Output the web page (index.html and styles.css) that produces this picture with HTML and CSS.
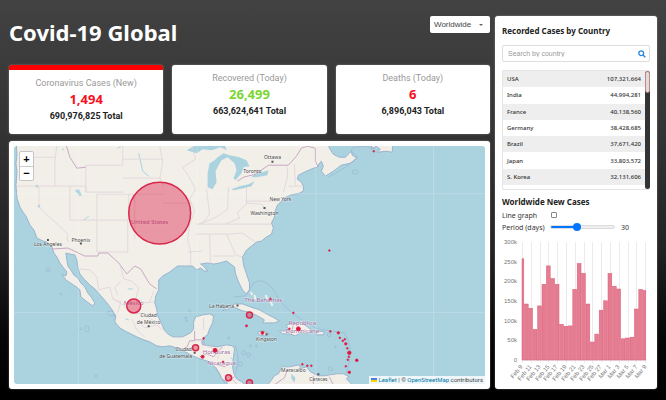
FILE: index.html
```html
<!DOCTYPE html>
<html lang="en">
<head>
<meta charset="utf-8">
<meta name="viewport" content="width=device-width, initial-scale=1">
<title>Covid-19 Global</title>
<link rel="stylesheet" href="styles.css">
</head>
<body>
<main class="app">
  <section class="main">
    <header class="header">
      <h1>Covid-19 Global</h1>
      <div class="picker">
        <select aria-label="Country"><option>Worldwide</option></select>
      </div>
    </header>
    <div class="stats">
      <article class="card stat stat-active">
        <h2>Coronavirus Cases (New)</h2>
        <p class="count red">1,494</p>
        <p class="total">690,976,825 Total</p>
      </article>
      <article class="card stat">
        <h2>Recovered (Today)</h2>
        <p class="count green">26,499</p>
        <p class="total">663,624,641 Total</p>
      </article>
      <article class="card stat">
        <h2>Deaths (Today)</h2>
        <p class="count red">6</p>
        <p class="total">6,896,043 Total</p>
      </article>
    </div>
    <div class="card map-card">
      <div class="map">
        <svg class="map-canvas" viewBox="14 146 472 240" preserveAspectRatio="xMidYMid slice" role="img" aria-label="Map of cases">
          <g class="land">
            <path d="M16 140L17 156L16 164L17 173L16 186L17 199L20 208L23 213L26 217L30 226L34 231L37 239L43 242L47 243L52 248L54 254L57 258L60 264L63 268L67 273L66 277L62 275L66 281L72 285L78 289L80 291L81 298L86 302L90 305L93 307L95 304L92 299L88 294L85 288L81 284L78 279L74 276L71 271L68 267L67 261L66 254L70 255L75 256L77 261L78 268L80 275L84 280L90 286L95 290L102 298L108 305L113 312L116 317L115 323L120 329L125 332L131 335L137 338L144 341L150 343L157 347L163 348L170 347L180 350L193 357L200 360L207 362L212 364L215 368L218 372L220 375L222 380L227 383L230 390H250L242 383L237 380L234 374L233 367L234 358L235 350L233 347L227 346L218 348L210 347L203 346L202 343L205 338L208 336L210 330L213 324L214 317L210 315L203 316L196 318L194 323L194 330L191 334L183 338L173 338L168 335L165 332L162 325L158 317L157 310L155 304L156 297L159 291L159 287L159 281L163 277L170 273L178 267L186 267L193 267L197 271L201 269L205 272L208 272L204 267L201 265L208 264L214 265L220 264L227 262L231 265L235 268L236 275L239 283L243 291L247 295L250 291L250 284L247 275L244 266L243 258L247 251L252 247L257 243L262 242L267 238L272 235L274 229L272 224L275 218L276 211L278 206L285 199L291 196L300 194L304 192L304 187L302 183L298 180L299 176L307 172L314 169L318 168L320 164L322 162L324 167L322 172L326 177L334 172L342 166L351 164L358 159L353 156L352 152L346 158L340 158L334 155L330 149L328 140Z"/>
            <path d="M372 150L377 147L381 150L378 153L387 152L393 153L394 140H374Z"/>
            <path d="M223 312L228 307L236 305L243 305L251 308L260 311L267 315L273 318L280 322L275 324L263 324L265 321L260 318L254 315L249 313L243 312L234 308Z"/>
            <path d="M280 332L289 332L287 326L294 324L302 324L308 328L313 332L309 335L301 334L296 337L290 335L283 335ZM258 333L264 332L270 335L265 337L260 336ZM317 332L325 333L324 336L317 336Z"/>
            <path d="M265 390L270 384L275 377L279 375L283 368L290 368L300 366L301 370L307 368L311 373L319 377L325 377L331 376L338 375L344 375L350 378L347 380L353 386V390Z"/>
            <path d="M251 293l2 3M255 296l1 5M266 296l2 4M271 302l2 5" stroke-width="2" stroke="#f2efe9"/>
          </g>
          <g class="water">
            <path d="M187 151L196 146L205 142H224L227 151L221 148L212 151L203 150L197 154ZM224 154L218 158L215 161L210 164L208 174L208 188L213 190L217 183L216 172L219 166L222 161L228 158L235 164L237 171L234 179L236 181L242 174L244 168L250 167L247 161L240 158L230 156ZM232 190L240 187L249 185L255 182L252 187L244 189L234 191ZM252 178L256 174L263 173L269 171L268 176L257 178Z"/>
            <path d="M75 191L79 190L82 196L80 197Z"/><path d="M337 146l4 6 6 1 6-7z"/><path d="M292 375l4 4-1 5-3-4zM209 277l1 2"/>
            <g class="lakes"><circle cx="22" cy="166" r="1"/><circle cx="37" cy="187" r="1"/><circle cx="39" cy="207" r="1"/><path d="M62 150h2M84 221l5-4M139 154l4 18 6 5M118 149l3-2M128 290h5M126 320l3 1M231 359l3 2"/></g>
          </g>
          <g class="borders">
            <path d="M17 187H86V193H124M39 187V208L68 235M55 187V161L57 146M70 187V221H128M86 166V193M86 166H123V146M123 179H161M97 195V253H128V221M68 235L67 241L70 243M97 195H165M129 221V195M135 195V240M160 146L163 163L160 179L164 187M123 160H163M21 160L36 158L55 158M135 222H161M163 204H192M192 146L196 160L183 168L189 177L196 190L190 200L195 212L190 225L188 241L191 252V266M207 190L210 215L203 225M229 188L228 210L220 216L210 221L199 225M247 188V205L238 213L240 219L226 225L196 225M247 202H279M247 204L262 205L272 217M226 225H272M196 235H229M210 235L211 267M227 235L236 256L243 258M229 235L243 234L256 243M188 253L203 252M213 257H235M288 168V178L284 193M295 165L296 186M289 187H303"/>
            <path class="national" d="M62 140L67 148L70 158L77 169L86 168M52 250L68 249L85 257H98L99 254H108L119 264L127 275L135 267L141 270L150 285L157 290M238 182L244 178L256 175L269 166H289L297 157L302 149L308 147L316 149V162L319 168M186 351L190 342H195V332M195 341H203L206 347M200 358L207 355L214 358L223 348M214 365L226 368M227 383L235 378M294 325L292 335M275 386L285 379L288 371M314 377V386M330 378L334 386"/>
            <path d="M80 270L90 271L97 278L99 291L110 288L113 300L121 303L118 314M120 265L124 280L132 282L139 289L136 300L146 304L155 303M113 300L125 307L131 314L143 315L154 322M140 324L145 329L157 326L163 331M132 320L137 331L145 338M121 282L115 289L118 296M150 303L154 292M204 319V331M205 346L214 350M220 349L218 360"/>
          </g>
          <g class="marine">
            <path d="M234 298L246 297L254 284Q262 278 272 288Q279 302 290 312Q300 320 318 330L345 334Q356 350 347 374M329 178Q351 167 358 157Q348 151 355 148Q369 146 376 149M238 386L229 376M216 368L226 386M236 347Q241 360 236 374M107 313l5-1 3 5-5 0z"/>
            <ellipse cx="356" cy="173" rx="3" ry="2"/><circle cx="48" cy="271" r="2"/><circle cx="61" cy="295" r="1"/><circle cx="81" cy="330" r="1"/><ellipse cx="87" cy="330" rx="2" ry="3"/><circle cx="96" cy="377" r="1"/><circle cx="190" cy="312" r="1"/><circle cx="186" cy="319" r="1"/><circle cx="187" cy="322" r="1"/><circle cx="229" cy="339" r="1"/><circle cx="244" cy="354" r="2"/><circle cx="249" cy="356" r="2"/><circle cx="241" cy="365" r="2"/><circle cx="251" cy="347" r="1"/><circle cx="257" cy="347" r="1"/><circle cx="330" cy="336" r="2"/><circle cx="336" cy="348" r="1"/><circle cx="331" cy="370" r="2"/>
          </g>
          <path class="tiles" d="M78.500 146V386M197.500 146V386M316.500 146V386M434.500 146V386M14 194.500H486M14 313.500H486"/>
          <g class="places">
            <text x="48" y="247">Los Angeles</text><text x="81" y="243">Phoenix</text><text x="273" y="160">Ottawa</text><text x="253" y="174">Toronto</text><text x="281" y="202">New York</text><text x="265" y="216">Washington</text><text x="149" y="318">Ciudad</text><text x="149" y="325">de México</text><text x="222" y="309">La Habana</text><text x="267" y="342">Kingston</text><text x="184" y="352">Ciudad</text><text x="176" y="359">de Guatemala</text><text x="294" y="373">Maracaibo</text><text x="319" y="382">Caracas</text>
            <g class="country"><text x="150" y="225">United States</text><text x="134" y="306">México</text><text x="264" y="303">The Bahamas</text><text x="303" y="326">República</text><text x="303" y="334">Dominicana</text><text x="217" y="355">Honduras</text><text x="222" y="366">Nicaragua</text></g>
            <path class="dots" d="M80 244.500h2M272 162.500h2M264 209h2M148 327.500h2M237 306.500h2M266 335.500h2M194 354h2M318 375.500h2M47 241h2"/>
          </g>
          <g class="cases">
            <circle cx="160" cy="214" r="31"/><circle cx="134" cy="307" r="7"/><circle cx="250" cy="316" r="3"/><circle cx="196" cy="349" r="3"/><circle cx="229" cy="379" r="3"/><circle cx="250" cy="384" r="3"/>
            <g class="small"><circle cx="215.500" cy="351.500" r="2"/><circle cx="299" cy="330" r="2"/><circle cx="203" cy="358" r="1.500"/><circle cx="263" cy="334" r="1.500"/><circle cx="350" cy="354" r="1.700"/><circle cx="357.500" cy="361.500" r="1.300"/><circle cx="350" cy="373.500" r="1.200"/><circle cx="247" cy="327" r="1"/><circle cx="271" cy="300" r=".8"/><circle cx="294" cy="314" r=".8"/><circle cx="290" cy="330" r=".8"/><circle cx="204" cy="339.500" r=".8"/><circle cx="223.500" cy="363" r=".8"/><circle cx="303" cy="365.500" r=".8"/><circle cx="308" cy="367" r=".8"/><circle cx="312" cy="367" r=".8"/><circle cx="331" cy="332.500" r=".8"/><circle cx="339" cy="334" r="1.200"/><circle cx="340.500" cy="339" r=".8"/><circle cx="343.500" cy="342" r=".8"/><circle cx="345.500" cy="340.500" r=".8"/><circle cx="346.500" cy="345" r="1.200"/><circle cx="348" cy="349.500" r=".8"/><circle cx="349.500" cy="358" r=".8"/><circle cx="348.500" cy="361" r=".8"/><circle cx="346.500" cy="367.500" r=".8"/><circle cx="374.500" cy="152" r=".8"/><circle cx="330" cy="251.500" r=".8"/></g>
          </g>
        </svg>
        <div class="zoom">
          <button type="button" aria-label="Zoom in">+</button>
          <button type="button" aria-label="Zoom out">−</button>
        </div>
        <div class="attribution"><svg class="flag" viewBox="0 0 6 4" aria-hidden="true"><path fill="#4c7be1" d="M0 0h6v2H0z"/><path fill="#ffd500" d="M0 2h6v2H0z"/></svg> <a href="#">Leaflet</a> | © <a href="#">OpenStreetMap</a> contributors</div>
      </div>
    </div>
  </section>

  <aside class="card panel">
    <h2>Recorded Cases by Country</h2>
    <div class="search">
      <input type="text" placeholder="Search by country" aria-label="Search by country">
      <svg viewBox="0 0 8 8" aria-hidden="true"><circle cx="3.200" cy="3.200" r="2.400"/><path d="M5 5L7.300 7.300"/></svg>
    </div>
    <div class="countries">
      <table>
        <tbody>
          <tr><td>USA</td><td>107,321,664</td></tr>
          <tr><td>India</td><td>44,994,281</td></tr>
          <tr><td>France</td><td>40,138,560</td></tr>
          <tr><td>Germany</td><td>38,428,685</td></tr>
          <tr><td>Brazil</td><td>37,671,420</td></tr>
          <tr><td>Japan</td><td>33,803,572</td></tr>
          <tr><td>S. Korea</td><td>32,131,606</td></tr>
        </tbody>
      </table>
      <div class="track"><div class="thumb"></div></div>
    </div>
    <h2 class="chart-title">Worldwide New Cases</h2>
    <div class="option">
      <label for="line">Line graph</label>
      <input id="line" type="checkbox">
    </div>
    <div class="option">
      <label for="period">Period (days)</label>
      <input id="period" type="range" min="7" max="65" value="30">
      <output for="period">30</output>
    </div>
    <svg class="chart" viewBox="502 238 148 142" role="img" aria-label="New cases per day">
      <path class="grid" d="M522.500 242V363M531.500 242V363M540.500 242V363M548.500 242V363M557.500 242V363M566.500 242V363M575.500 242V363M584.500 242V363M592.500 242V363M601.500 242V363M610.500 242V363M619.500 242V363M628.500 242V363M636.500 242V363M645.500 242V363M522 360.500H646"/>
      <g class="bars">
        <rect x="522" y="258.800" width="1.800" height="101.200"/><rect x="524.400" y="304" width="3.800" height="56"/><rect x="528.800" y="308.200" width="3.800" height="51.800"/><rect x="533.200" y="329.400" width="3.800" height="30.600"/><rect x="537.600" y="305.900" width="3.800" height="54.100"/><rect x="542" y="284.300" width="3.800" height="75.700"/><rect x="546.400" y="265.900" width="3.800" height="94.100"/><rect x="550.800" y="278.500" width="3.800" height="81.500"/><rect x="555.200" y="284.300" width="3.800" height="75.700"/><rect x="559.600" y="324.300" width="3.800" height="35.700"/><rect x="564" y="326.300" width="3.800" height="33.700"/><rect x="568.400" y="325.900" width="3.800" height="34.100"/><rect x="572.800" y="289.400" width="3.800" height="70.600"/><rect x="577.200" y="263.500" width="3.800" height="96.500"/><rect x="581.600" y="273.400" width="3.800" height="86.600"/><rect x="586" y="304" width="3.800" height="56"/><rect x="590.400" y="342" width="3.800" height="18"/><rect x="594.800" y="334.100" width="3.800" height="25.900"/><rect x="599.200" y="310.200" width="3.800" height="49.800"/><rect x="603.600" y="300.800" width="3.800" height="59.200"/><rect x="608" y="273.400" width="3.800" height="86.600"/><rect x="612.400" y="286.200" width="3.800" height="73.800"/><rect x="616.800" y="289" width="3.800" height="71"/><rect x="621.200" y="338.800" width="3.800" height="21.200"/><rect x="625.600" y="338" width="3.800" height="22"/><rect x="630" y="337.200" width="3.800" height="22.800"/><rect x="634.400" y="309" width="3.800" height="51"/><rect x="638.800" y="289.400" width="3.800" height="70.600"/><rect x="643.200" y="290.600" width="2.600" height="69.400"/>
      </g>
      <g class="y-axis"><text x="517" y="244">300k</text><text x="517" y="264">250k</text><text x="517" y="283">200k</text><text x="517" y="303">150k</text><text x="517" y="323">100k</text><text x="517" y="342">50k</text><text x="517" y="362">0</text></g>
      <g class="x-axis"><text transform="translate(523 367) rotate(-50)">Feb 9</text><text transform="translate(532 367) rotate(-50)">Feb 11</text><text transform="translate(541 367) rotate(-50)">Feb 13</text><text transform="translate(550 367) rotate(-50)">Feb 15</text><text transform="translate(558 367) rotate(-50)">Feb 17</text><text transform="translate(567 367) rotate(-50)">Feb 19</text><text transform="translate(576 367) rotate(-50)">Feb 21</text><text transform="translate(585 367) rotate(-50)">Feb 23</text><text transform="translate(594 367) rotate(-50)">Feb 25</text><text transform="translate(602 367) rotate(-50)">Feb 27</text><text transform="translate(611 367) rotate(-50)">Mar 1</text><text transform="translate(620 367) rotate(-50)">Mar 3</text><text transform="translate(629 367) rotate(-50)">Mar 5</text><text transform="translate(638 367) rotate(-50)">Mar 7</text><text transform="translate(647 367) rotate(-50)">Mar 9</text></g>
    </svg>
  </aside>
</main>
</body>
</html>
```
FILE: styles.css
```css
* { box-sizing: border-box; margin: 0; padding: 0; }

body {
  min-height: 100vh;
  background: linear-gradient(#424242, #333 34%, #222 62%, #060606 84%, #000);
  font-family: "Noto Sans", "Open Sans", sans-serif;
  color: #222;
}

.app {
  display: grid;
  grid-template-columns: minmax(0, 1fr) 162px;
  gap: 5px;
  padding: 16px 9px 9px;
}

.card {
  background: #fff;
  border-radius: 3px;
  box-shadow: 0 0 2px rgba(255, 255, 255, .4);
}

.main { display: flex; flex-direction: column; min-width: 0; }

.header {
  display: flex;
  justify-content: space-between;
  align-items: flex-start;
  height: 49px;
}

h1 { font-size: 22px; line-height: 32px; color: #fff; }

.picker { position: relative; }

.picker select {
  appearance: none;
  display: block;
  width: 60px;
  height: 17px;
  padding: 0 4px;
  border: 0;
  border-radius: 2px;
  background: #fff;
  color: #444;
  font: 8px "Liberation Sans", sans-serif;
}

.picker::after {
  content: "";
  position: absolute;
  right: 7px;
  top: 8px;
  border: 2px solid transparent;
  border-top-color: #666;
}

.stats { display: grid; grid-template-columns: repeat(3, 1fr); gap: 9px; }

.stat { height: 69px; padding-top: 7px; text-align: center; }
.stat-active { border-top: 5px solid #f00; }
.stat h2 { font: 9px/12px Roboto, sans-serif; color: #999; }
.count { font-size: 13px; line-height: 20px; font-weight: 700; }
.red { color: #f8101c; }
.green { color: #7bd62f; }
.total { font: 700 9px/14px Roboto, sans-serif; }

.map-card { display: flex; flex: 1; margin-top: 7px; padding: 5px; }

.map {
  position: relative;
  flex: 1;
  min-width: 0;
  overflow: hidden;
  border-radius: 3px;
  background: #aad3df;
}

.map-canvas { position: absolute; width: 100%; height: 100%; }
.land { fill: #f2efe9; stroke: #9bb5cf; stroke-width: 1; }
.water { fill: #aad3df; }
.lakes { stroke: #aad3df; fill: #aad3df; }
.lakes path { fill: none; }
.borders { fill: none; stroke: #dccfd8; stroke-width: .7; }
.national { stroke: #c9a9c5; stroke-width: 1; }
.marine { fill: none; stroke: #98a9cd; stroke-width: .7; opacity: .7; }
.tiles { stroke: #fff; stroke-width: 1; opacity: .2; }
.places { font-size: 5px; text-anchor: middle; fill: #444; }
.places text { stroke: #fff; stroke-width: 1; stroke-opacity: .5; paint-order: stroke; }
.places .country { font-size: 6px; fill: #a06a9d; }
.dots { stroke: #555; stroke-width: 2; }
.cases { fill: #dc143c; fill-opacity: .4; stroke: #d9284c; stroke-width: 1.500; }
.small { fill-opacity: 1; stroke-width: 1; }

.zoom {
  position: absolute;
  left: 5px;
  top: 5px;
  border: 1px solid #c5c5c5;
  border-radius: 2px;
  background: #fff;
}

.zoom button {
  display: block;
  width: 13px;
  height: 14px;
  border: 0;
  background: none;
  color: #000;
  font: 700 11px/13px "Liberation Sans", sans-serif;
}

.zoom button + button { border-top: 1px solid #ccc; }

.attribution {
  position: absolute;
  right: 0;
  bottom: 0;
  padding: 0 2px;
  background: rgba(255, 255, 255, .8);
  color: #444;
  font: 6px/8px Roboto, sans-serif;
  white-space: nowrap;
}

.attribution a { color: #0078a8; text-decoration: none; }
.flag { width: 6px; height: 4px; }

.panel { padding: 8px 7px 9px; }
.panel h2 { font-size: 8px; line-height: 14px; }

.search {
  display: flex;
  align-items: center;
  height: 17px;
  margin-top: 7px;
  padding: 0 3px 0 5px;
  border: 1px solid #ddd;
  border-radius: 2px;
}

.search input {
  flex: 1;
  min-width: 0;
  border: 0;
  outline: 0;
  background: none;
  font: 7px "Liberation Sans", sans-serif;
}

.search input::placeholder { color: #999; }
.search svg { width: 8px; height: 8px; fill: none; stroke: #2185e0; stroke-width: 1.300; }

.countries {
  display: flex;
  align-items: flex-start;
  height: 120px;
  margin-top: 8px;
  border: 1px solid #e4e4e4;
  border-right: 0;
  border-radius: 2px;
}

table { flex: 1; height: 114px; border-collapse: collapse; font-size: 6px; line-height: 8px; font-weight: 500; color: #333; }
tr:nth-child(odd) { background: #eee; }
td { padding: 0 4px; }
td:last-child { text-align: right; }

.track { width: 5px; height: 118px; border-radius: 3px; background: #333; }
.thumb { height: 22px; border: 1px solid #c48484; border-radius: 3px; background: #ddd; }

.panel .chart-title { margin-top: 5px; }

.option { display: flex; align-items: center; height: 12px; font-size: 7px; color: #333; }
.option label { width: 48px; white-space: nowrap; }
.option output { margin-left: 6px; }

input[type="checkbox"] {
  appearance: none;
  width: 6px;
  height: 6px;
  margin-left: 1px;
  border: 1px solid #888;
  border-radius: 1px;
  background: #fff;
}

input[type="range"] {
  appearance: none;
  width: 65px;
  height: 4px;
  border: 1px solid #ddd;
  border-radius: 2px;
  background: linear-gradient(90deg, #0075ff 40%, #eee 40%);
}

input[type="range"]::-webkit-slider-thumb {
  appearance: none;
  width: 8px;
  height: 8px;
  border-radius: 50%;
  background: #0075ff;
}

.chart { display: block; width: 100%; margin-top: 5px; overflow: visible; }
.grid { stroke: #e3e3e3; stroke-width: .7; }
.bars { fill: #e47d91; stroke: #dc5b76; stroke-width: .5; }
.y-axis, .x-axis { font: 6px "Liberation Sans", sans-serif; fill: #777; text-anchor: end; }
```
